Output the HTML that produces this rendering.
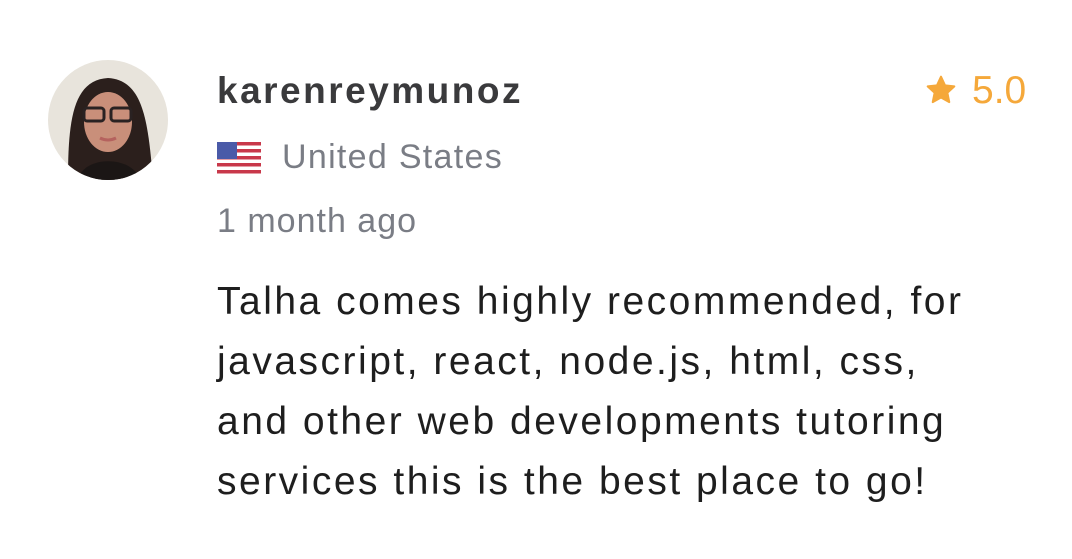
<!DOCTYPE html>
<html><head><style>
body{margin:0;width:1072px;height:559px;background:#fff;font-family:"Liberation Sans",sans-serif;position:relative;overflow:hidden}
.av{position:absolute;left:48px;top:60px;width:120px;height:120px;border-radius:50%;background:#e8e4dc;overflow:hidden}
.t{position:absolute;white-space:nowrap}
</style></head><body>
<div class="av">
<svg width="120" height="120" viewBox="0 0 120 120">
<path d="M20 120 C20 60 25 20 60 18 C95 20 100 60 105 120Z" fill="#2b1f1c"/>
<ellipse cx="60" cy="62" rx="24" ry="30" fill="#c98f7a"/>
<path d="M30 120 C35 95 85 95 92 120Z" fill="#1b1615"/>
<rect x="36" y="48" width="20" height="13" rx="3" fill="none" stroke="#2a2222" stroke-width="3"/>
<rect x="63" y="48" width="20" height="13" rx="3" fill="none" stroke="#2a2222" stroke-width="3"/>
<path d="M52 78 Q60 82 68 78" stroke="#b5625e" stroke-width="3" fill="none"/>
</svg></div>
<div class="t" style="left:217px;top:70px;font-size:37px;font-weight:bold;color:#3a3a3c;letter-spacing:2.5px">karenreymunoz</div>
<svg style="position:absolute;left:924px;top:74px" width="34" height="32" viewBox="0 0 24 24"><path d="M12 2l3 6.5 7 .8-5.2 4.8 1.4 7L12 17.6 5.8 21.1l1.4-7L2 9.3l7-.8z" fill="#f5a83a" stroke="#f5a83a" stroke-linejoin="round" stroke-width="1.5"/></svg>
<div class="t" style="left:972px;top:69px;font-size:39px;color:#f5a83a">5.0</div>
<svg style="position:absolute;left:217px;top:142px" width="44" height="32" viewBox="0 0 44 32">
<rect width="44" height="32" rx="4" fill="#fff"/>
<g fill="#c8384a"><rect y="0" width="44" height="3.5"/><rect y="7" width="44" height="3.5"/><rect y="14" width="44" height="3.5"/><rect y="21" width="44" height="3.5"/><rect y="28" width="44" height="3.5"/></g>
<rect width="20" height="17" fill="#4a5aa8"/>
</svg>
<div class="t" style="left:282px;top:138px;font-size:34px;color:#7a7d85;letter-spacing:1.3px">United States</div>
<div class="t" style="left:217px;top:202px;font-size:34px;color:#7a7d85;letter-spacing:1px">1 month ago</div>
<div class="t" style="left:217px;top:272px;font-size:39px;line-height:60px;color:#1e1e1e;letter-spacing:2.5px">Talha comes highly recommended, for<br>javascript, react, node.js, html, css,<br>and other web developments tutoring<br>services this is the best place to go!</div>
</body></html>
